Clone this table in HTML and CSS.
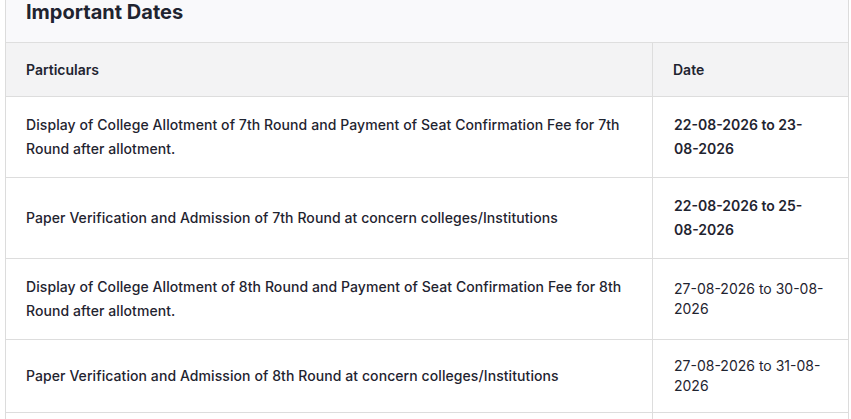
FILE: index.html
```html
<!DOCTYPE html>
<html>
<head>
<meta charset="utf-8">
<link rel="stylesheet" href="styles.css">
</head>
<body>
<section class="card">
  <h2 class="card-title">Important Dates</h2>
  <table class="dates">
    <thead>
      <tr><th class="col-part">Particulars</th><th class="col-date">Date</th></tr>
    </thead>
    <tbody>
      <tr>
        <td>Display of College Allotment of 7th Round and Payment of Seat Confirmation Fee for 7th Round after allotment.</td>
        <td class="date bold">22-08-2026 to 23-08-2026</td>
      </tr>
      <tr>
        <td>Paper Verification and Admission of 7th Round at concern colleges/Institutions</td>
        <td class="date bold">22-08-2026 to 25-08-2026</td>
      </tr>
      <tr>
        <td>Display of College Allotment of 8th Round and Payment of Seat Confirmation Fee for 8th Round after allotment.</td>
        <td class="date">27-08-2026 to 30-08-2026</td>
      </tr>
      <tr>
        <td>Paper Verification and Admission of 8th Round at concern colleges/Institutions</td>
        <td class="date">27-08-2026 to 31-08-2026</td>
      </tr>
      <tr class="spacer">
        <td></td>
        <td class="date"></td>
      </tr>
    </tbody>
  </table>
</section>
</body>
</html>
```
FILE: styles.css
```css
html, body {
  margin: 0;
  padding: 0;
  background: #ffffff;
}
body {
  font-family: Inter, "Noto Sans", sans-serif;
  color: #1f2430;
}
.card {
  margin-left: 5px;
  width: 842px;
  border-left: 1px solid #dcdcdc;
  border-right: 1px solid #dcdcdc;
  background: #f9f9fb;
}
.card-title {
  margin: 0;
  padding: 0 20px 18px;
  font-size: 20px;
  line-height: 24px;
  font-weight: 700;
  color: #1f2430;
  border-bottom: 1px solid #dedede;
}
.dates {
  width: 100%;
  border-collapse: collapse;
  background: #ffffff;
  table-layout: fixed;
}
.dates th, .dates td {
  border: 1px solid #dddddd;
  text-align: left;
  vertical-align: middle;
}
.dates tr > :first-child { border-left: none; }
.dates tr > :last-child { border-right: none; }
.dates thead tr > * { border-top: none; }
.dates th {
  background: #f3f3f4;
  font-size: 14px;
  line-height: 21px;
  font-weight: 600;
  padding: 16px 20px;
}
.col-part { width: 606px; }
.dates td {
  font-size: 14px;
  letter-spacing: 0.08px;
  line-height: 24px;
  font-weight: 500;
  padding: 16px 20px;
}
.dates td.date {
  padding: 16px 21px;
  letter-spacing: 0;
  font-weight: 400;
  line-height: 20px;
}
.dates td.date.bold {
  font-weight: 600;
  line-height: 24px;
}
.dates tr.spacer td {
  height: 60px;
}
```
